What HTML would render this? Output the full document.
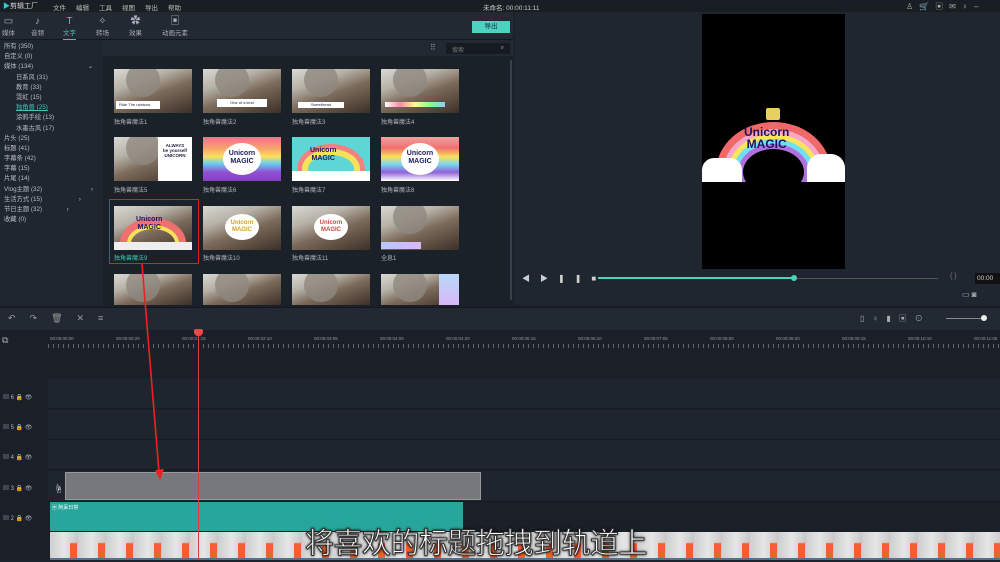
<!DOCTYPE html>
<html><head><meta charset="utf-8">
<style>
*{margin:0;padding:0;box-sizing:border-box}
body{width:1000px;height:560px;overflow:hidden;background:#1d232c;font-family:"Liberation Sans","Noto Sans CJK SC",sans-serif;color:#c8ccd2;position:relative;font-size:7px}
.abs{position:absolute}
.top{left:0;top:0;width:1000px;height:12px;background:#191e25}
.menu span{margin-right:10px}
.tabs{left:0;top:12px;width:513px;height:28px;background:#222933;border-bottom:1px solid #14181e}
.tab{position:absolute;top:4px;text-align:center;font-size:6.5px;color:#aab}
.tab i{display:block;font-style:normal;font-size:10px;line-height:11px}
.side{left:0;top:40px;width:103px;height:265px;background:#1f2630}
.side div{height:10.2px;line-height:10.2px;font-size:6.3px;color:#b8bcc4;padding-left:4px}
.side .in{padding-left:16px}
.grid{left:103px;top:40px;width:410px;height:265px;background:#1b2129}
.gbar{left:103px;top:40px;width:410px;height:16px;background:#222933}
.th{position:absolute;width:78px;height:44px;overflow:hidden;background:linear-gradient(160deg,#d8d8d2 0%,#b7b2a8 30%,#7d6c5c 55%,#3d2f27 100%)}
.th .hd{position:absolute;left:12px;top:-6px;width:34px;height:34px;border-radius:50%;background:#8f8880;opacity:.8}
.lbl{position:absolute;font-size:6px;color:#b0b5bb}
.prev{left:515px;top:12px;width:485px;height:293px;background:#1f2630}
.tl{left:0;top:305px;width:1000px;height:255px;background:#1b2028}
.track{position:absolute;left:48px;width:952px;background:#1f252e;border-bottom:1px solid #171b21}
.ticon{position:absolute;left:3px;font-size:6px;color:#aab}
</style></head><body>

<div class="abs top"></div>
<div class="abs" style="left:3px;top:1px;font-size:7px;color:#ddd"><span style="color:#3cc;font-weight:bold">▶</span>剪辑工厂</div>
<div class="abs menu" style="left:53px;top:2px;font-size:6.5px;color:#bbb"><span>文件</span><span>编辑</span><span>工具</span><span>视图</span><span>导出</span><span>帮助</span></div>
<div class="abs" style="left:483px;top:2px;font-size:6.5px;color:#ccc">未命名: 00:00:11:11</div>
<div class="abs" style="left:906px;top:1px;font-size:8px;color:#aaa;letter-spacing:6px">♙🛒▣✉♀–</div>

<div class="abs tabs">
 <div class="tab" style="left:2px"><i>▭</i>媒体</div>
 <div class="tab" style="left:31px"><i>♪</i>音频</div>
 <div class="tab" style="left:63px;color:#3fc7b8;border-bottom:1px solid #3fc7b8;height:24px"><i>T</i>文字</div>
 <div class="tab" style="left:96px"><i>✧</i>转场</div>
 <div class="tab" style="left:129px"><i>✿</i>效果</div>
 <div class="tab" style="left:162px"><i>▣</i>动画元素</div>
 <div class="abs" style="left:472px;top:9px;width:38px;height:12px;background:#4fd1c0;color:#124;font-size:6.5px;text-align:center;line-height:12px">导出</div>
</div>

<div class="abs side" style="padding-top:2px">
 <div>所有 (350)</div><div>自定义 (0)</div><div>媒体 (134) <span style="float:right;margin-right:10px">⌄</span></div>
 <div class="in">日系风 (31)</div><div class="in">教育 (33)</div><div class="in">霓虹 (15)</div>
 <div class="in" style="color:#3fc7b8;text-decoration:underline">独角兽 (25)</div>
 <div class="in">涂鸦手绘 (13)</div><div class="in">水墨古风 (17)</div>
 <div>片头 (25)</div><div>标题 (41)</div><div>字幕条 (42)</div><div>字幕 (15)</div><div>片尾 (14)</div>
 <div>Vlog主题 (32)<span style="float:right;margin-right:10px">›</span></div>
 <div>生活方式 (15)<span style="float:right;margin-right:10px">›</span></div>
 <div>节日主题 (32)<span style="float:right;margin-right:10px">›</span></div>
 <div>收藏 (0)</div>
</div>

<div class="abs grid"></div>
<div class="abs gbar"></div>
<div class="abs" style="left:430px;top:43px;font-size:8px;color:#999">⠿</div>
<div class="abs" style="left:446px;top:43px;width:64px;height:11px;background:#161b22;font-size:6px;color:#777;padding:2px 6px">搜索<span style="float:right;color:#bbb">⌕</span></div>
<div class="abs" style="left:510px;top:60px;width:2px;height:240px;background:#3a414b"></div>

<!-- row1 -->
<div class="th" style="left:114px;top:69px"><div class="hd"></div><div class="abs" style="left:2px;top:32px;width:44px;height:8px;background:#fff;font-size:4px;color:#224;line-height:8px;padding-left:3px">Ride The rainbow</div></div>
<div class="th" style="left:203px;top:69px"><div class="hd"></div><div class="abs" style="left:14px;top:30px;width:50px;height:8px;background:#fff;font-size:4px;color:#224;text-align:center;line-height:8px">One of a kind</div></div>
<div class="th" style="left:292px;top:69px"><div class="hd"></div><div class="abs" style="left:6px;top:33px;width:46px;height:6px;background:#fff;font-size:4px;color:#224;text-align:center">Sweetheart</div></div>
<div class="th" style="left:381px;top:69px"><div class="hd"></div><div class="abs" style="left:4px;top:33px;width:60px;height:5px;background:linear-gradient(90deg,#fff,#f8a,#ff8,#8f8,#8cf)"></div></div>
<div class="lbl" style="left:114px;top:117px">独角兽魔法1</div><div class="lbl" style="left:203px;top:117px">独角兽魔法2</div><div class="lbl" style="left:292px;top:117px">独角兽魔法3</div><div class="lbl" style="left:381px;top:117px">独角兽魔法4</div>
<!-- row2 -->
<div class="th" style="left:114px;top:137px"><div class="hd"></div><div class="abs" style="left:44px;top:0;width:34px;height:44px;background:#fff;font-size:4.5px;color:#224;font-weight:bold;text-align:center;padding-top:6px">ALWAYS<br>be yourself<br>UNICORN</div></div>
<div class="th" style="left:203px;top:137px;background:linear-gradient(180deg,#f07090 0,#f9a070 25%,#fbe15a 45%,#6ad0f0 60%,#9050d0 80%,#8a3ec8 100%)"><div class="abs" style="left:20px;top:6px;width:38px;height:32px;border-radius:50%;background:#fff;font-size:7px;font-weight:bold;color:#1a1a60;text-align:center;line-height:8px;padding-top:7px">Unicorn<br>MAGIC</div></div>
<div class="th" style="left:292px;top:137px;background:#5fd6d6"><div class="abs" style="left:10px;top:12px;width:58px;height:40px;border-radius:50%;border:6px solid #f5e25a;box-shadow:0 0 0 5px #f58080"></div><div class="abs" style="left:0;top:34px;width:78px;height:10px;background:#fff"></div><div class="abs" style="left:18px;top:10px;font-size:7px;font-weight:bold;color:#1a1a60;text-align:center;line-height:8px">Unicorn<br>MAGIC</div></div>
<div class="th" style="left:381px;top:137px;background:linear-gradient(180deg,#f0a0a0 0,#f07070 25%,#fbe15a 45%,#7ad8f0 62%,#9060d8 80%,#fff 100%)"><div class="abs" style="left:20px;top:6px;width:38px;height:32px;border-radius:50%;background:#fff;font-size:7px;font-weight:bold;color:#1a1a60;text-align:center;line-height:8px;padding-top:7px">Unicorn<br>MAGIC</div></div>
<div class="lbl" style="left:114px;top:185px">独角兽魔法5</div><div class="lbl" style="left:203px;top:185px">独角兽魔法6</div><div class="lbl" style="left:292px;top:185px">独角兽魔法7</div><div class="lbl" style="left:381px;top:185px">独角兽魔法8</div>
<!-- row3 -->
<div class="th" style="left:114px;top:206px"><div class="abs" style="left:6px;top:12px;width:66px;height:50px;border-radius:50%;border:7px solid #f07070;box-shadow:inset 0 0 0 4px #fbe15a"></div><div class="abs" style="left:0;top:36px;width:78px;height:8px;background:#eee"></div><div class="abs" style="left:22px;top:10px;font-size:7px;font-weight:bold;color:#1a1a60;text-align:center;line-height:8px">Unicorn<br>MAGIC</div></div>
<div class="th" style="left:203px;top:206px"><div class="abs" style="left:22px;top:8px;width:34px;height:26px;border-radius:50%;background:#fff;font-size:6px;font-weight:bold;color:#d9a020;text-align:center;line-height:7px;padding-top:6px">Unicorn<br>MAGIC</div></div>
<div class="th" style="left:292px;top:206px"><div class="abs" style="left:22px;top:8px;width:34px;height:26px;border-radius:50%;background:#fff;font-size:6px;font-weight:bold;color:#c44;text-align:center;line-height:7px;padding-top:6px">Unicorn<br>MAGIC</div></div>
<div class="th" style="left:381px;top:206px"><div class="hd"></div><div class="abs" style="left:0;top:36px;width:40px;height:7px;background:linear-gradient(90deg,#b8c8f8,#d8b8f8)"></div></div>
<div class="abs" style="left:109px;top:199px;width:90px;height:65px;border:1.5px solid #e02020"></div>
<div class="lbl" style="left:114px;top:253px;color:#3fc7b8">独角兽魔法9</div><div class="lbl" style="left:203px;top:253px">独角兽魔法10</div><div class="lbl" style="left:292px;top:253px">独角兽魔法11</div><div class="lbl" style="left:381px;top:253px">全息1</div>
<!-- row4 -->
<div class="th" style="left:114px;top:274px;height:31px"><div class="hd"></div></div>
<div class="th" style="left:203px;top:274px;height:31px"><div class="hd"></div></div>
<div class="th" style="left:292px;top:274px;height:31px"><div class="hd"></div></div>
<div class="th" style="left:381px;top:274px;height:31px"><div class="hd"></div><div class="abs" style="left:58px;top:0;width:20px;height:31px;background:linear-gradient(#b8d8f8,#d8b8f8)"></div></div>

<!-- preview -->
<div class="abs prev"></div>
<div class="abs" style="left:702px;top:14px;width:143px;height:255px;background:#000"></div>
<div class="abs" style="left:702px;top:118px;width:143px;height:64px;overflow:hidden">
 <div class="abs" style="left:14px;top:4px;width:115px;height:100px;border-radius:50%;border:7px solid #f06868;box-shadow:inset 0 0 0 5px #f7a8c8,inset 0 0 0 10px #fbe55a,inset 0 0 0 15px #6fe0f0,inset 0 0 0 20px #b070e0"></div>
 <div class="abs" style="left:0;top:40px;width:40px;height:24px;background:#fff;border-radius:12px 12px 0 0"></div>
 <div class="abs" style="left:105px;top:36px;width:38px;height:28px;background:#fff;border-radius:14px 14px 0 0"></div>
 <div class="abs" style="left:42px;top:8px;font-size:12px;font-weight:bold;color:#1a1460;text-align:center;line-height:12px">Unicorn<br>MAGIC</div>
</div>
<div class="abs" style="left:766px;top:108px;width:14px;height:12px;background:#e8d060;border-radius:2px"></div>
<div class="abs" style="left:522px;top:273px;font-size:8px;color:#ccc;letter-spacing:10px">◀▶❚❚■</div>
<div class="abs" style="left:598px;top:278px;width:340px;height:1px;background:#555"></div>
<div class="abs" style="left:598px;top:277px;width:196px;height:2px;background:#4fd1c0"></div>
<div class="abs" style="left:791px;top:275px;width:6px;height:6px;border-radius:50%;background:#4fd1c0"></div>
<div class="abs" style="left:950px;top:273px;font-size:7px;color:#777">{ }</div>
<div class="abs" style="left:975px;top:273px;width:25px;height:11px;background:#111;font-size:6.5px;color:#ccc;padding:2px">00:00</div>
<div class="abs" style="left:962px;top:290px;font-size:8px;color:#aaa">▭ ◙</div>

<!-- timeline -->
<div class="abs tl"></div>
<div class="abs" style="left:0;top:307px;width:1000px;height:23px;background:#222933;border-top:1px solid #14181e"></div>
<div class="abs" style="left:8px;top:313px;font-size:9px;color:#999;letter-spacing:14px">↶↷🗑✕≡</div>
<div class="abs" style="left:860px;top:313px;font-size:8px;color:#aaa;letter-spacing:8px">▯♀▮▣⊙</div>
<div class="abs" style="left:946px;top:318px;width:40px;height:1px;background:#888"></div>
<div class="abs" style="left:981px;top:315px;width:6px;height:6px;border-radius:50%;background:#eee"></div>
<div class="abs" style="left:2px;top:335px;font-size:9px;color:#aaa">⧉</div>
<div class="abs" style="left:48px;top:336px;width:952px;font-size:4.5px;color:#999;white-space:nowrap;word-spacing:0">
<span style="position:absolute;left:2px">00:00:00:00</span><span style="position:absolute;left:68px">00:00:00:20</span><span style="position:absolute;left:134px">00:00:01:15</span><span style="position:absolute;left:200px">00:00:02:10</span><span style="position:absolute;left:266px">00:00:03:05</span><span style="position:absolute;left:332px">00:00:04:00</span><span style="position:absolute;left:398px">00:00:04:20</span><span style="position:absolute;left:464px">00:00:05:15</span><span style="position:absolute;left:530px">00:00:06:10</span><span style="position:absolute;left:596px">00:00:07:05</span><span style="position:absolute;left:662px">00:00:08:00</span><span style="position:absolute;left:728px">00:00:08:20</span><span style="position:absolute;left:794px">00:00:09:15</span><span style="position:absolute;left:860px">00:00:10:10</span><span style="position:absolute;left:926px">00:00:11:05</span></div>
<div class="abs" style="left:48px;top:344px;width:952px;height:4px;background:repeating-linear-gradient(90deg,#666 0 1px,transparent 1px 5px)"></div>

<div class="track" style="top:379px;height:30px"></div>
<div class="track" style="top:410px;height:30px"></div>
<div class="track" style="top:440px;height:30px"></div>
<div class="track" style="top:471px;height:31px"></div>
<div class="ticon" style="top:392px">▤ 6 🔒 👁</div>
<div class="ticon" style="top:422px">▤ 5 🔒 👁</div>
<div class="ticon" style="top:452px">▤ 4 🔒 👁</div>
<div class="ticon" style="top:483px">▤ 3 🔒 👁</div>
<div class="ticon" style="top:513px">▤ 2 🔒 👁</div>

<div class="abs" style="left:65px;top:472px;width:416px;height:28px;background:#75787c;border:1px solid #999"></div>
<div class="abs" style="left:54px;top:482px;font-size:9px;color:#fff">☝</div>
<div class="abs" style="left:50px;top:502px;width:413px;height:29px;background:#27a79c"></div>
<div class="abs" style="left:52px;top:504px;font-size:5px;color:#fff">▣ 阿呆日常</div>
<div class="abs" style="left:50px;top:532px;width:950px;height:26px;background:repeating-linear-gradient(90deg,#cfcfcf 0,#e6e6e6 14px,#c8c8c8 28px)"></div>
<div class="abs" style="left:50px;top:532px;width:950px;height:26px;background:repeating-linear-gradient(90deg,transparent 0 20px,#f06030 20px 27px,transparent 27px 28px);-webkit-mask:linear-gradient(transparent 40%,#000 45%);mask:linear-gradient(transparent 40%,#000 45%)"></div>
<div class="abs" style="left:50px;top:558px;width:950px;height:2px;background:#58708a"></div>

<div class="abs" style="left:198px;top:330px;width:1px;height:230px;background:#d84040"></div>
<div class="abs" style="left:194px;top:329px;width:9px;height:7px;background:#f04848;border-radius:2px 2px 4px 4px"></div>

<svg class="abs" style="left:0;top:0" width="1000" height="560"><line x1="142" y1="264" x2="159" y2="472" stroke="#f02020" stroke-width="1.6"/><polygon points="155,470 164,469 160,480" fill="#f02020"/></svg>

<div class="abs" style="left:305px;top:520px;font-size:29px;color:#fff;font-family:'Noto Sans CJK SC',sans-serif;-webkit-text-stroke:1px #333;text-shadow:0 0 3px #000,0 0 2px #000;letter-spacing:-0.5px">将喜欢的标题拖拽到轨道上</div>
</body></html>
